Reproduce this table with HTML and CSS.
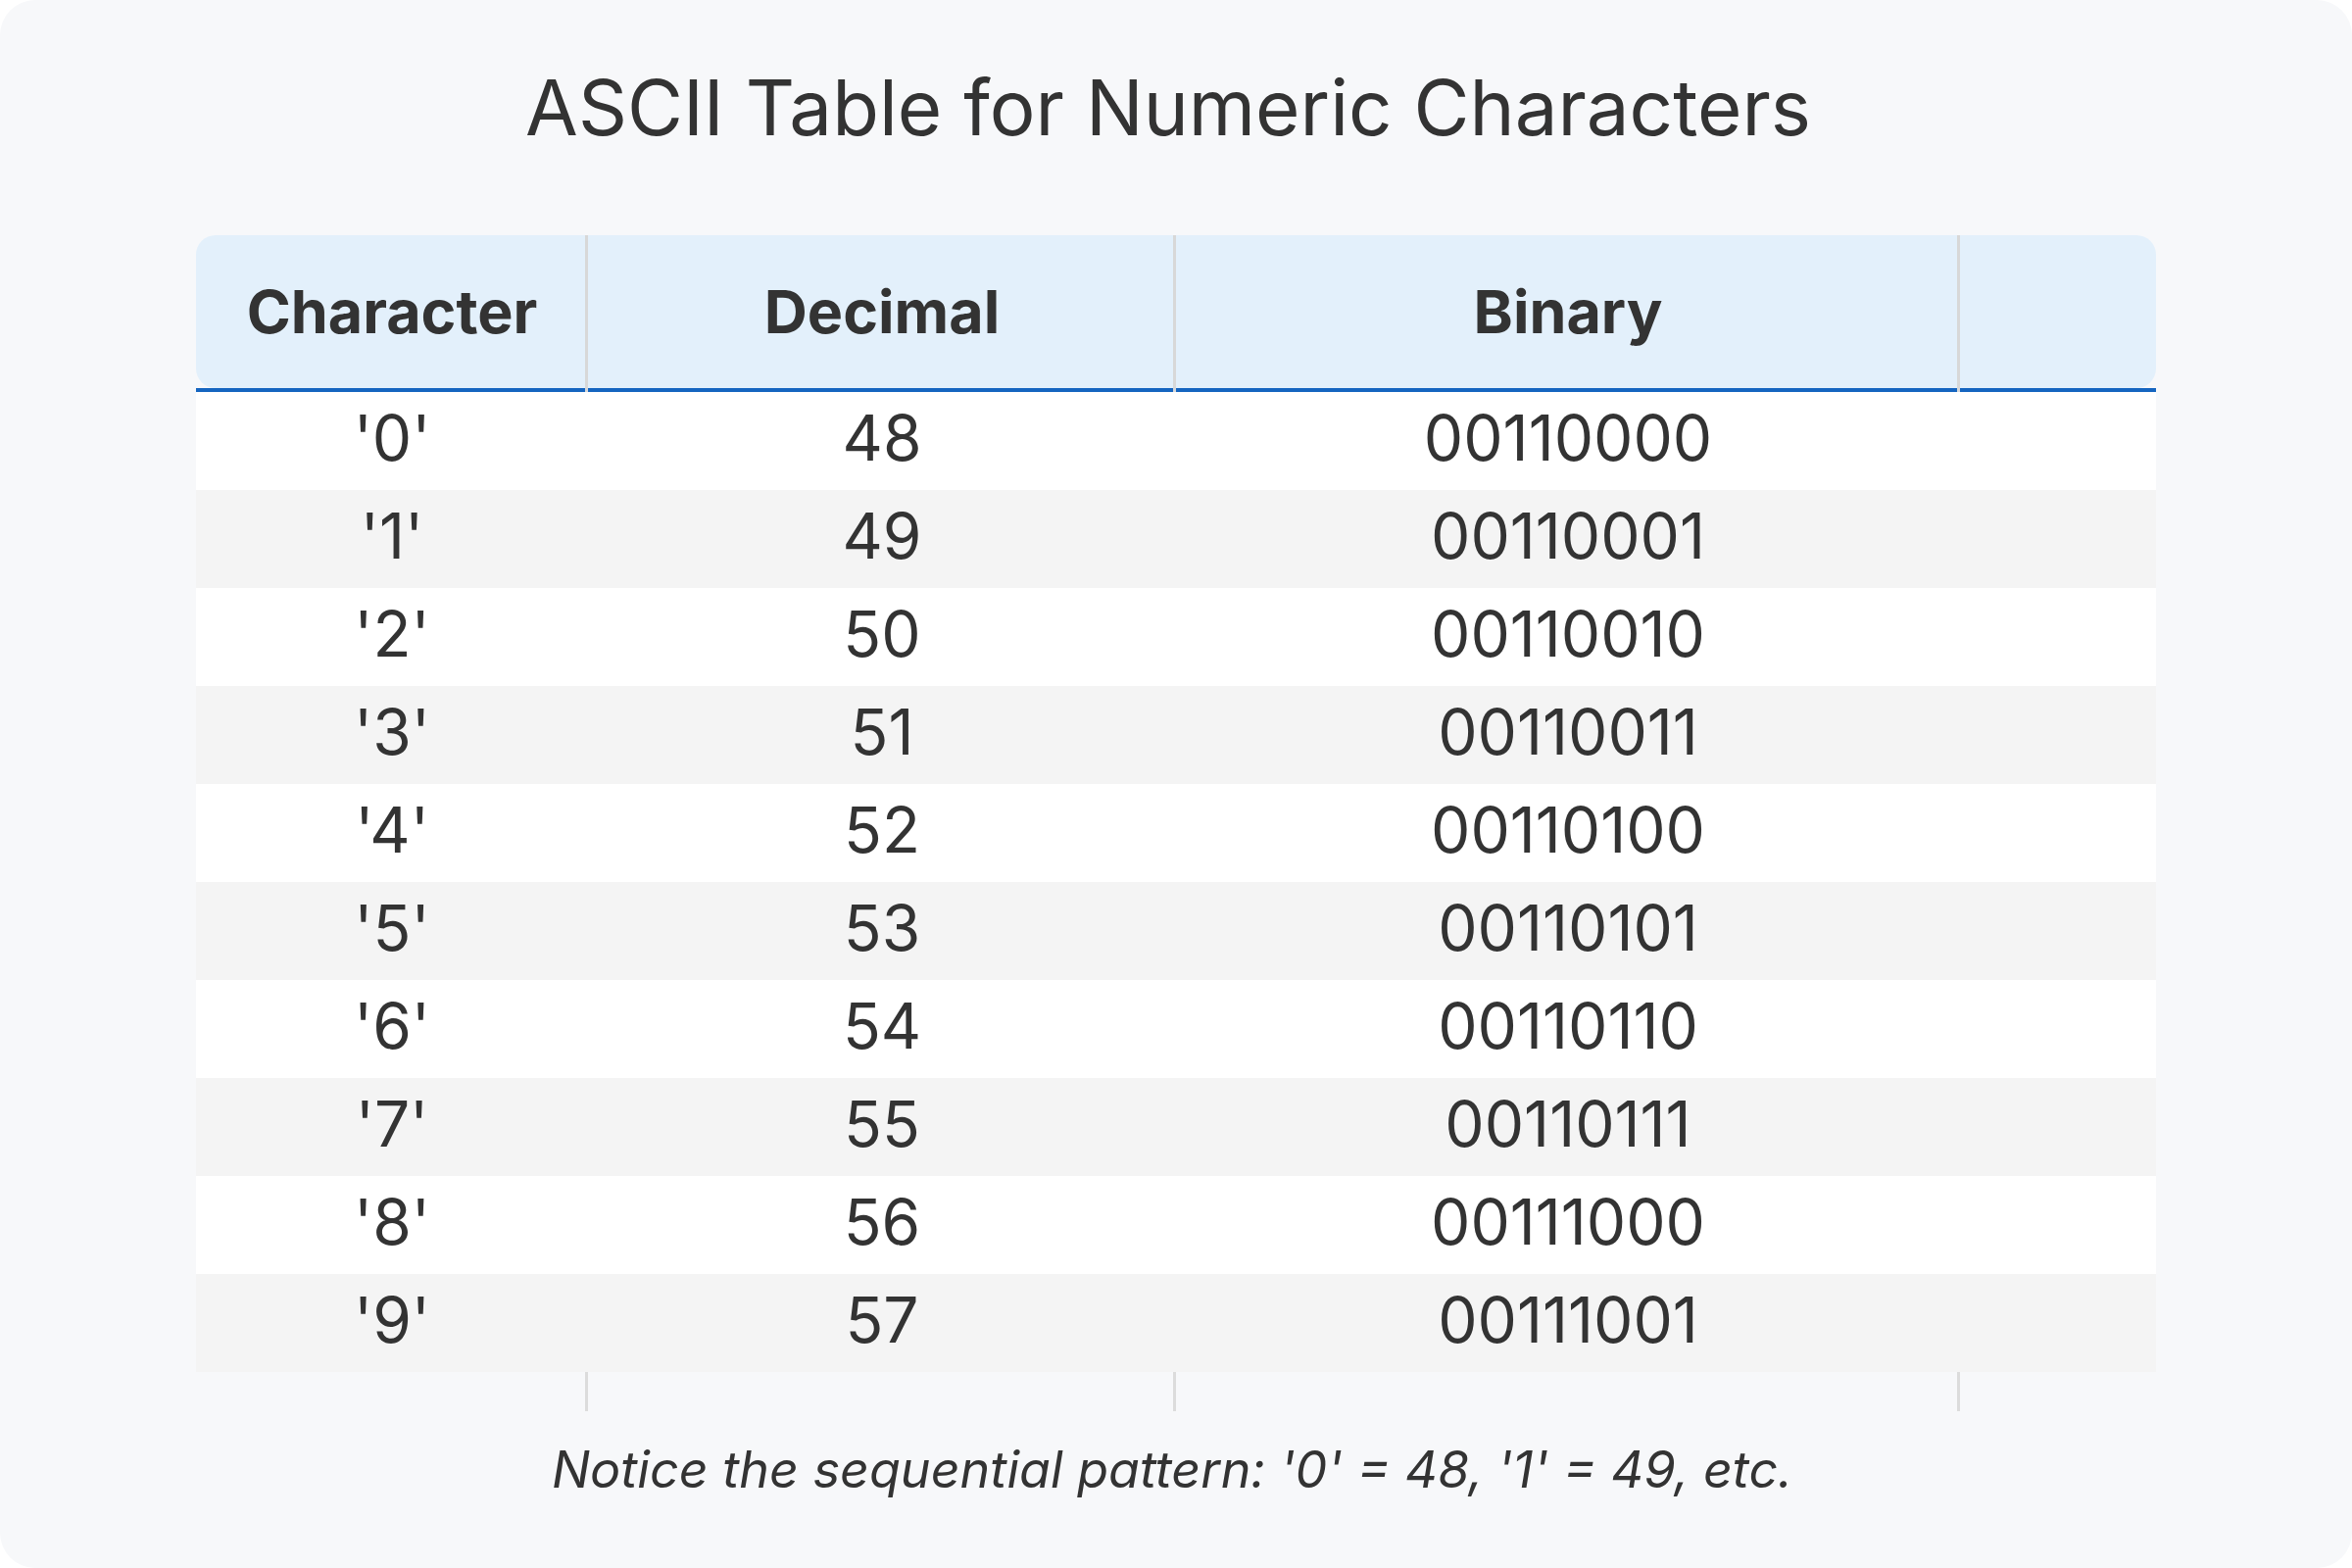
FILE: index.html
```html
<!DOCTYPE html>
<html lang="en">
<head>
<meta charset="utf-8">
<title>ASCII Table for Numeric Characters</title>
<link rel="stylesheet" href="styles.css">
</head>
<body>
<div class="page">
  <h1 class="title">ASCII Table for Numeric Characters</h1>
  <div class="table">
    <div class="row head">
      <div class="cell th first">Character</div>
      <div class="cell th">Decimal</div>
      <div class="cell th">Binary</div>
      <div class="cell th last"></div>
    </div>
    <div class="row"><div class="cell">'0'</div><div class="cell">48</div><div class="cell">00110000</div><div class="cell"></div></div>
    <div class="row alt"><div class="cell">'1'</div><div class="cell">49</div><div class="cell">00110001</div><div class="cell"></div></div>
    <div class="row"><div class="cell">'2'</div><div class="cell">50</div><div class="cell">00110010</div><div class="cell"></div></div>
    <div class="row alt"><div class="cell">'3'</div><div class="cell">51</div><div class="cell">00110011</div><div class="cell"></div></div>
    <div class="row"><div class="cell">'4'</div><div class="cell">52</div><div class="cell">00110100</div><div class="cell"></div></div>
    <div class="row alt"><div class="cell">'5'</div><div class="cell">53</div><div class="cell">00110101</div><div class="cell"></div></div>
    <div class="row"><div class="cell">'6'</div><div class="cell">54</div><div class="cell">00110110</div><div class="cell"></div></div>
    <div class="row alt"><div class="cell">'7'</div><div class="cell">55</div><div class="cell">00110111</div><div class="cell"></div></div>
    <div class="row"><div class="cell">'8'</div><div class="cell">56</div><div class="cell">00111000</div><div class="cell"></div></div>
    <div class="row alt"><div class="cell">'9'</div><div class="cell">57</div><div class="cell">00111001</div><div class="cell"></div></div>
    <div class="row foot">
      <div class="fcell"></div><div class="fcell"></div><div class="fcell"></div><div class="fcell last"></div>
    </div>
  </div>
  <p class="note">Notice the sequential pattern: '0' = 48, '1' = 49, etc.</p>
</div>
</body>
</html>
```

FILE: styles.css
```css
html, body {
  margin: 0;
  padding: 0;
  background: #ffffff;
}

body {
  font-family: "Inter", "Noto Sans", "Liberation Sans", sans-serif;
  color: #333333;
}

.page {
  width: 2400px;
  height: 1600px;
  box-sizing: border-box;
  background: #f7f8fa;
  border-radius: 36px;
  padding-top: 62px;
  display: flex;
  flex-direction: column;
  align-items: center;
}

.title {
  margin: 0 16px 82px 0;
  font-size: 78px;
  line-height: 96px;
  font-weight: 400;
  color: #333333;
}

.table {
  width: 2000px;
  display: flex;
  flex-direction: column;
}

.row {
  display: grid;
  grid-template-columns: 400px 600px 800px 200px;
  height: 100px;
  background: #ffffff;
}

.row.alt {
  background: #f4f4f4;
}

.cell {
  display: flex;
  align-items: center;
  justify-content: center;
  padding-bottom: 8px;
  font-size: 64px;
  color: #333333;
}

.row.head {
  height: 156px;
  background: transparent;
  border-bottom: 4px solid #1565c0;
}

.th {
  position: relative;
  padding-bottom: 0;
  background: #e3f0fb;
  font-weight: 700;
  font-size: 61px;
}

.th::after {
  content: "";
  position: absolute;
  top: 0;
  right: 0;
  bottom: -4px;
  width: 3px;
  background: #d8d8d8;
}

.th.first {
  border-radius: 20px 0 0 20px;
}

.th.last {
  border-radius: 0 20px 20px 0;
}

.th.last::after {
  display: none;
}

.row.foot {
  height: 40px;
  background: transparent;
}

.fcell {
  border-right: 3px solid #dcdcdc;
}

.fcell.last {
  border-right: none;
}

.note {
  margin: 24px 8px 0 0;
  font-size: 52px;
  line-height: 72px;
  font-style: italic;
  color: #333333;
}
```
